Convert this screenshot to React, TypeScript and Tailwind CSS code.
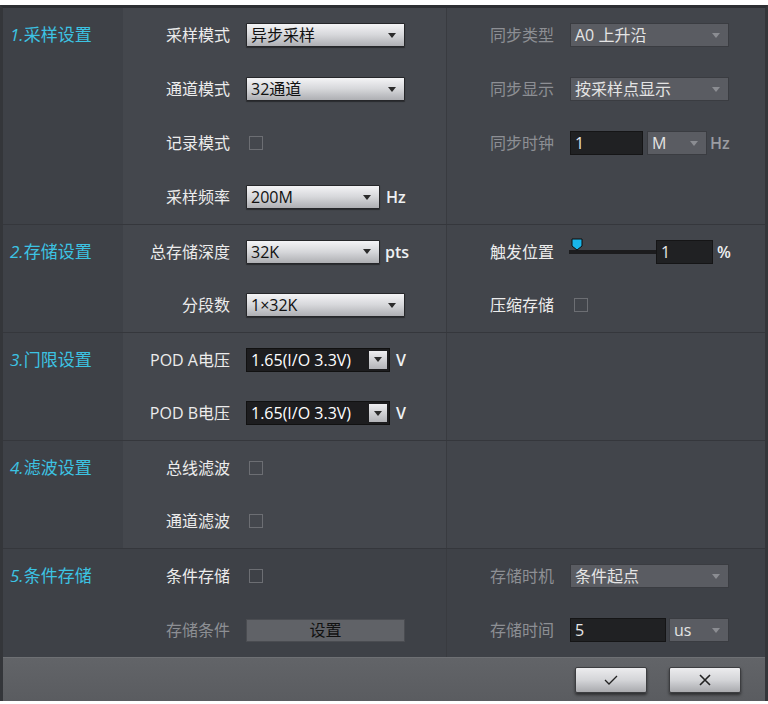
import React from 'react';

const Caret: React.FC<{ color?: string }> = ({ color = '#2b2b2b' }) => (
    <svg width="8" height="5" viewBox="0 0 8 5"><path d="M0 0h8L4 5z" fill={color} /></svg>
);

const Select: React.FC<{ value: string; w: string }> = ({ value, w }) => (
    <div className={`${w} h-6 flex items-center justify-between pl-[4px] pr-[8px] border border-[#26272a] rounded-[1px] bg-gradient-to-b from-[#f4f4f6] via-[#d6d7da] to-[#aeafb3] text-[#111] shadow-[0_1px_1px_rgba(0,0,0,0.4)]`}>
        <span className="leading-none">{value}</span>
        <Caret />
    </div>
);

const DimSelect: React.FC<{ value: string; w: string }> = ({ value, w }) => (
    <div className={`${w} h-6 flex items-center justify-between pl-[4px] pr-[8px] border border-[#3a3c41] bg-[#5a5c62] text-[#e4e4e4]`}>
        <span className="leading-none">{value}</span>
        <Caret color="#8b8d92" />
    </div>
);

const DarkInput: React.FC<{ value: string; w: string }> = ({ value, w }) => (
    <div className={`${w} h-6 flex items-center pl-[4px] border border-[#151516] bg-[#202123] text-[#e8e8e8]`}>
        <span className="leading-none">{value}</span>
    </div>
);

const PodSelect: React.FC<{ value: string }> = ({ value }) => (
    <div className="w-[144px] h-6 flex items-center justify-between pl-[4px] pr-[2px] border border-[#111] bg-[#1d1d1f] text-white">
        <span className="leading-none">{value}</span>
        <div className="w-[18px] h-[18px] flex items-center justify-center bg-gradient-to-b from-[#eeeef0] to-[#b3b4b8]">
            <Caret />
        </div>
    </div>
);

const Check = () => <div className="ml-[3px] w-[14px] h-[14px] border border-[#6c6e73]" />;

const Unit: React.FC<{ children: React.ReactNode; dim?: boolean; gap?: string }> = ({ children, dim, gap = 'ml-[6px]' }) => (
    <span className={`${gap} font-semibold ${dim ? 'text-[#9a9ca1]' : 'text-[#eef0f2]'}`}>{children}</span>
);

const Row: React.FC<{ label: string; dim?: boolean; h?: string; children?: React.ReactNode }> = ({ label, dim, h = 'h-[54px]', children }) => (
    <div className={`${h} flex items-center`}>
        <div className={`w-[107px] text-right ${dim ? 'text-[#8d8f94]' : 'text-[#ececec]'}`}>{label}</div>
        <div className="ml-4 flex items-center">{children}</div>
    </div>
);

const Section: React.FC<{ num: string; title: string; mid: React.ReactNode; right?: React.ReactNode; light?: boolean; first?: boolean }> = ({ num, title, mid, right, light = true, first }) => (
    <div className={`flex ${first ? '' : 'border-t border-[#35373c]'}`}>
        <div className="w-[120px] pl-[7px]">
            <div className={`${first ? 'h-[54px]' : 'h-[53px]'} flex items-center text-[17px] text-[#3cc3e3]`}>
                <span className="italic">{num}</span>
                <span>{title}</span>
            </div>
        </div>
        <div className={`w-[323px] ${light ? 'bg-[#44474d]' : ''}`}>{mid}</div>
        <div className={`flex-1 border-l border-[#393b40] ${light ? 'bg-[#42454b]' : ''}`}>{right}</div>
    </div>
);

const Slider = () => (
    <div className="relative w-[87px] h-6 -ml-[1px] flex items-center">
        <div className="w-full h-[4px] bg-[#1c1c1e]" />
        <svg className="absolute left-[2px] top-[-2px]" width="12" height="13" viewBox="0 0 12 13">
            <path d="M1 1h10v7l-5 4l-5-4z" fill="#19b6ea" stroke="#0d0d0d" strokeWidth="1" />
        </svg>
    </div>
);

const FooterButton: React.FC<{ children: React.ReactNode }> = ({ children }) => (
    <button className="w-[72px] h-[26px] flex items-center justify-center rounded-[2px] bg-gradient-to-b from-[#ececee] via-[#d4d5d8] to-[#a9aaae] border border-[#3c3d40] shadow-[0_2px_3px_rgba(0,0,0,0.5)]">
        {children}
    </button>
);

export default function App() {
    return (
        <div className="w-[768px] h-[704px] bg-white pt-[5px] pb-[3px] font-['Open_Sans','Noto_Sans_CJK_SC',sans-serif] text-[16px]">
            <div className="h-full flex flex-col bg-[#3e4147] border-t-[3px] border-t-[#2d2f33] border-x-[3px] border-x-[#34363a]">
                <Section
                    first
                    num="1."
                    title="采样设置"
                    mid={<>
                        <Row label="采样模式"><Select value="异步采样" w="w-[159px]" /></Row>
                        <Row label="通道模式"><Select value="32通道" w="w-[159px]" /></Row>
                        <Row label="记录模式"><Check /></Row>
                        <Row label="采样频率"><Select value="200M" w="w-[134px]" /><Unit>Hz</Unit></Row>
                    </>}
                    right={<>
                        <Row label="同步类型" dim><DimSelect value="A0 上升沿" w="w-[159px]" /></Row>
                        <Row label="同步显示" dim><DimSelect value="按采样点显示" w="w-[159px]" /></Row>
                        <Row label="同步时钟" dim>
                            <DarkInput value="1" w="w-[73px]" />
                            <div className="ml-[4px]"><DimSelect value="M" w="w-[60px]" /></div>
                            <Unit dim gap="ml-[3px]">Hz</Unit>
                        </Row>
                    </>}
                />
                <Section
                    num="2."
                    title="存储设置"
                    mid={<>
                        <Row label="总存储深度" h="h-[53px]"><Select value="32K" w="w-[134px]" /><Unit gap="ml-[5px]">pts</Unit></Row>
                        <Row label="分段数"><Select value="1×32K" w="w-[159px]" /></Row>
                    </>}
                    right={<>
                        <Row label="触发位置" h="h-[53px]">
                            <Slider />
                            <DarkInput value="1" w="w-[57px]" />
                            <Unit gap="ml-[4px]">%</Unit>
                        </Row>
                        <Row label="压缩存储"><div className="ml-[1px]"><Check /></div></Row>
                    </>}
                />
                <Section
                    num="3."
                    title="门限设置"
                    mid={<>
                        <Row label="POD A电压" h="h-[53px]"><PodSelect value="1.65(I/O 3.3V)" /><Unit>V</Unit></Row>
                        <Row label="POD B电压"><PodSelect value="1.65(I/O 3.3V)" /><Unit>V</Unit></Row>
                    </>}
                />
                <Section
                    num="4."
                    title="滤波设置"
                    mid={<>
                        <Row label="总线滤波" h="h-[53px]"><Check /></Row>
                        <Row label="通道滤波"><Check /></Row>
                    </>}
                />
                <Section
                    num="5."
                    title="条件存储"
                    light={false}
                    mid={<>
                        <Row label="条件存储"><Check /></Row>
                        <Row label="存储条件" dim>
                            <button className="w-[159px] h-[23px] flex items-center justify-center bg-[#606267] border border-[#4a4c51] text-[#111]">设置</button>
                        </Row>
                    </>}
                    right={<>
                        <Row label="存储时机" dim><DimSelect value="条件起点" w="w-[159px]" /></Row>
                        <Row label="存储时间" dim>
                            <DarkInput value="5" w="w-[96px]" />
                            <div className="ml-[3px]"><DimSelect value="us" w="w-[60px]" /></div>
                        </Row>
                    </>}
                />
                <div className="flex-1 flex items-center justify-end gap-[22px] pr-[24px] bg-gradient-to-b from-[#626468] to-[#5a5c60] border-t border-[#6e7074]">
                    <FooterButton>
                        <svg width="14" height="10" viewBox="0 0 14 10"><path d="M1 5l4 4l8-8" fill="none" stroke="#222" strokeWidth="1.3" /></svg>
                    </FooterButton>
                    <FooterButton>
                        <svg width="12" height="12" viewBox="0 0 12 12"><path d="M1 1l10 10M11 1L1 11" fill="none" stroke="#222" strokeWidth="1.6" /></svg>
                    </FooterButton>
                </div>
            </div>
        </div>
    );
}
